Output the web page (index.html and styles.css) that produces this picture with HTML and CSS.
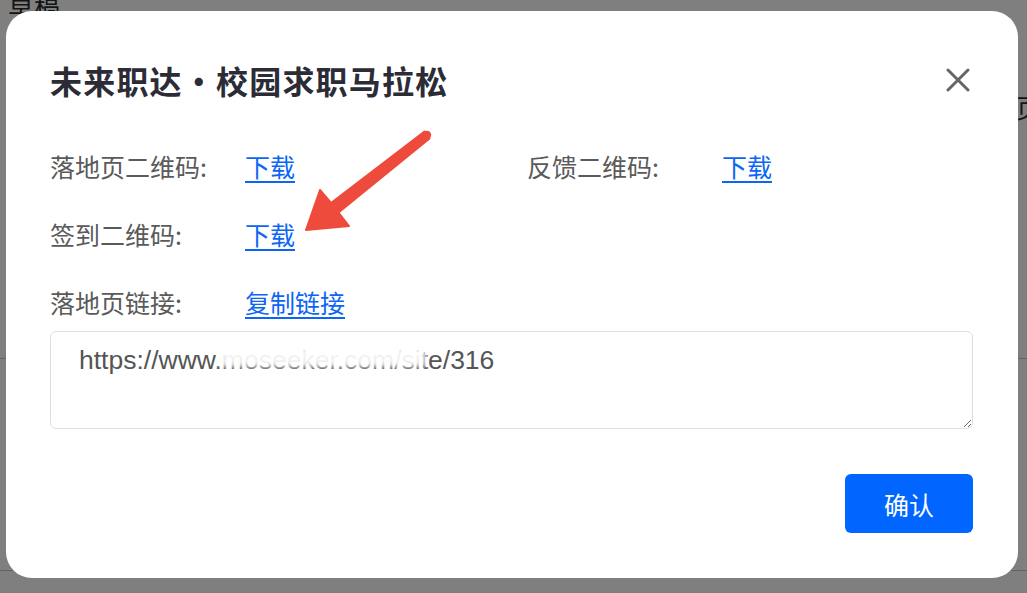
FILE: index.html
```html
<!DOCTYPE html>
<html lang="zh-CN">
<head>
<meta charset="utf-8">
<title>未来职达・校园求职马拉松</title>
<link rel="stylesheet" href="styles.css">
</head>
<body>
<div class="page">
  <div class="page-title">草稿</div>
  <div class="page-side">页</div>
  <div class="page-line line-a"></div>
  <div class="page-line line-b"></div>
</div>
<div class="mask"></div>
<div class="modal">
  <div class="head">
    <h1 class="title">未来职达・校园求职马拉松</h1>
    <button class="close" aria-label="关闭">
      <svg width="24" height="24" viewBox="0 0 24 24"><path d="M2 2 L22 22 M22 2 L2 22" stroke="#666" stroke-width="3" stroke-linecap="round" fill="none"/></svg>
    </button>
  </div>
  <div class="rows">
    <div class="row">
      <span class="label">落地页二维码:</span><a class="link" href="#">下载</a>
      <span class="label">反馈二维码:</span><a class="link" href="#">下载</a>
    </div>
    <div class="row">
      <span class="label">签到二维码:</span><a class="link" href="#">下载</a>
    </div>
    <div class="row">
      <span class="label">落地页链接:</span><a class="link" href="#">复制链接</a>
    </div>
  </div>
  <div class="field">
    <textarea class="url" readonly>https://www.moseeker.com/site/316</textarea>
    <div class="smudge"></div>
  </div>
  <div class="foot">
    <button class="ok">确认</button>
  </div>
  <svg class="arrow" width="140" height="120" viewBox="300 125 140 120">
    <polygon points="424.5,131.5 331,203 320,190 306,230 349,226 338.5,212.5 429.5,138.5" fill="#ee4b3d" stroke="#ee4b3d" stroke-width="2" stroke-linejoin="round"/>
    <circle cx="427" cy="135" r="4.2" fill="#ee4b3d"/>
  </svg>
</div>
</body>
</html>
```
FILE: styles.css
```css
html, body {
  margin: 0;
  padding: 0;
  width: 1027px;
  height: 593px;
  overflow: hidden;
  font-family: "Noto Sans CJK SC", "Liberation Sans", sans-serif;
}
.page {
  position: relative;
  width: 1027px;
  height: 593px;
  background: #fff;
}
.page-title {
  position: absolute;
  left: 8px;
  top: -14px;
  font-size: 26px;
  color: #2a2a2a;
}
.page-side {
  position: absolute;
  left: 1016px;
  top: 88px;
  font-size: 26px;
  color: #2a2a2a;
}
.page-line {
  position: absolute;
  left: 0;
  right: 0;
  height: 1px;
  background: #c8c8c8;
}
.line-a { top: 358px; }
.line-b { top: 570px; }
.mask {
  position: absolute;
  inset: 0;
  background: rgba(0, 0, 0, 0.5);
}
.modal {
  position: absolute;
  left: 6px;
  top: 11px;
  width: 1012px;
  height: 567px;
  box-sizing: border-box;
  background: #fff;
  border-radius: 26px;
  padding: 49px 45px 45px 44px;
  display: flex;
  flex-direction: column;
}
.head {
  display: flex;
  align-items: center;
  justify-content: space-between;
  height: 40px;
}
.title {
  margin: 0;
  font-size: 32px;
  font-weight: 700;
  color: #2c2c36;
  line-height: 40px;
  letter-spacing: 1.2px;
}
.close {
  border: 0;
  background: none;
  padding: 0;
  margin-right: 3px;
  width: 24px;
  height: 24px;
  display: flex;
}
.rows {
  margin-top: 49px;
  display: flex;
  flex-direction: column;
  gap: 34px;
}
.row {
  display: flex;
  align-items: center;
  height: 34px;
  font-size: 25px;
}
.label {
  width: 195px;
  color: #5a5a5a;
}
.link {
  width: 282px;
  color: #0b66f5;
  text-decoration: underline;
  text-underline-offset: 4px;
  text-decoration-thickness: 1.5px;
}
.row .link:last-child {
  width: auto;
}
.field {
  position: relative;
  margin-top: 12px;
}
.url {
  display: block;
  width: 100%;
  height: 98px;
  box-sizing: border-box;
  border: 1.5px solid #dcdee3;
  border-radius: 6px;
  padding: 12px 28px;
  font-family: "Liberation Sans", Arial, sans-serif;
  font-size: 26.5px;
  line-height: 32px;
  color: #555;
  resize: vertical;
  outline: none;
}
.smudge {
  position: absolute;
  left: 170px;
  top: 16px;
  width: 206px;
  height: 20px;
  background: rgba(255, 255, 255, 0.92);
  filter: blur(2.5px);
}
.foot {
  margin-top: 45px;
  display: flex;
  justify-content: flex-end;
}
.ok {
  width: 128px;
  height: 59px;
  border: 0;
  border-radius: 6px;
  background: #0066ff;
  color: #fff;
  font-family: "Noto Sans CJK SC", sans-serif;
  font-size: 25px;
}
.arrow {
  position: absolute;
  left: 294px;
  top: 114px;
}
```
